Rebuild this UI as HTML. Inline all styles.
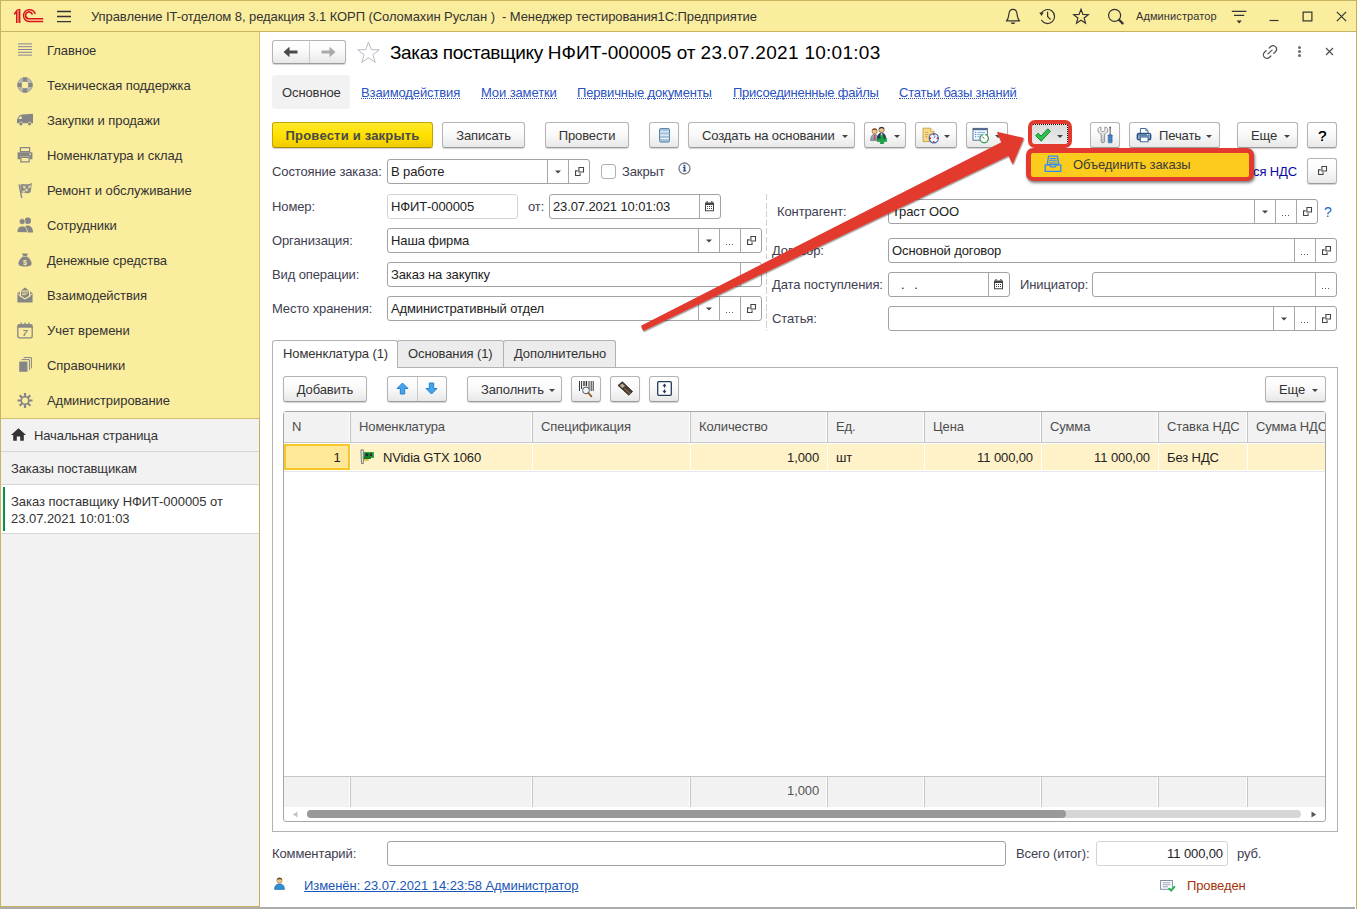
<!DOCTYPE html>
<html lang="ru">
<head>
<meta charset="utf-8">
<title>Заказ поставщику НФИТ-000005 от 23.07.2021 10:01:03</title>
<style>
*{box-sizing:border-box;margin:0;padding:0}
html,body{width:1357px;height:909px;overflow:hidden;background:#fff}
body{position:relative;font-family:"Liberation Sans",Arial,sans-serif;font-size:13px;color:#333;line-height:16px;letter-spacing:-0.11px}
.abs,.abs>*{position:absolute}
#win{position:absolute;left:0;top:0;width:1357px;height:909px;overflow:hidden}
/* frame */
#bt{left:0;top:0;width:1357px;height:1px;background:#c8b45e}
#bl{left:0;top:0;width:1px;height:909px;background:#c8b45e}
#br{left:1356px;top:0;width:1px;height:909px;background:#c4af5a}
#bb{left:0;top:907px;width:1355px;height:2px;background:#adadad}
/* header */
#hdr{left:1px;top:1px;width:1355px;height:31px;background:#fbed9e;border-bottom:1px solid #c8b45e}
#hdr .t{left:90px;top:8px;font-size:13px;color:#333;white-space:pre;letter-spacing:-0.075px}
#hdr .u{left:1135px;top:8px;font-size:11px;color:#333;line-height:14px;letter-spacing:0.1px}
/* sidebar */
#side{left:1px;top:32px;width:259px;height:386px;background:#fbed9e;border-right:1px solid #d5c36f}
#side .i{left:46px;font-size:13px;color:#333;white-space:nowrap;letter-spacing:-0.06px}
#side svg{left:17px}
#open{left:1px;top:418px;width:259px;height:489px;background:#f2f2f2;border-right:1px solid #c2ae58;border-top:1px solid #d2c070;border-bottom:1px solid #c8b45e}
#open .r{left:0;width:258px;border-bottom:1px solid #d6d6d6;font-size:13px;color:#333}
/* generic */
.btn{position:absolute;height:26px;border:1px solid #b4b4b4;border-bottom-color:#9c9c9c;border-radius:3px;background:linear-gradient(#ffffff 0%,#fafafa 45%,#e8e8e8 100%);box-shadow:0 1px 1px rgba(0,0,0,.18);font-size:13px;color:#333;line-height:25px;text-align:center;white-space:nowrap}
.inp{position:absolute;height:25px;border:1px solid #a2a2a2;border-radius:3px;background:#fff;font-size:13px;color:#222;line-height:23px;padding-left:3px;white-space:nowrap;overflow:hidden}
.inp i{position:absolute;top:0;height:23px;width:1px;background:#a8a8a8}
.lbl{position:absolute;font-size:13px;color:#404050;white-space:nowrap}
.car{position:absolute;width:0;height:0;border-left:3px solid transparent;border-right:3px solid transparent;border-top:3px solid #444}
.lnk{position:absolute;font-size:13px;color:#2a52be;white-space:nowrap;border-bottom:1px dotted #2a52be;line-height:14px;height:13px}
.inp .ic{position:absolute}
.inp .el{position:absolute;width:1px;height:1px;background:#5a5a5a;box-shadow:3px 0 #5a5a5a,6px 0 #5a5a5a}
.th{position:absolute;background:#f2f2f2;color:#4d4d4d;font-size:13px;overflow:hidden;white-space:nowrap}
.th span{position:absolute;top:7px}
.vd{position:absolute;width:1px;background:#d9d9d9}
.td{position:absolute;background:#fff2c8}
.tf{position:absolute;background:#f2f2f2}
.tx{position:absolute;font-size:13px;color:#222;white-space:nowrap}
</style>
</head>
<body>
<div id="win">

<!-- HEADER -->
<div id="hdr" class="abs">
  <div class="t">Управление IT-отделом 8, редакция 3.1 КОРП (Соломахин Руслан )  - Менеджер тестирования1С:Предприятие</div>
  <div class="u">Администратор</div>
</div>

<!-- SIDEBAR -->
<div id="side" class="abs">
  <div class="i" style="top:11px">Главное</div>
  <div class="i" style="top:46px">Техническая поддержка</div>
  <div class="i" style="top:81px">Закупки и продажи</div>
  <div class="i" style="top:116px">Номенклатура и склад</div>
  <div class="i" style="top:151px">Ремонт и обслуживание</div>
  <div class="i" style="top:186px">Сотрудники</div>
  <div class="i" style="top:221px">Денежные средства</div>
  <div class="i" style="top:256px">Взаимодействия</div>
  <div class="i" style="top:291px">Учет времени</div>
  <div class="i" style="top:326px">Справочники</div>
  <div class="i" style="top:361px">Администрирование</div>
</div>

<!-- OPEN WINDOWS PANEL -->
<div id="open" class="abs">
  <div class="r" style="top:0;height:33px"><span style="position:absolute;left:33px;top:9px">Начальная страница</span></div>
  <div class="r" style="top:33px;height:33px"><span style="position:absolute;left:10px;top:9px">Заказы поставщикам</span></div>
  <div class="r" style="top:66px;height:49px;background:#fff"><span style="position:absolute;left:10px;top:9px;width:246px;letter-spacing:-0.04px;line-height:16.5px">Заказ поставщику НФИТ-000005 от 23.07.2021 10:01:03</span>
    <div style="position:absolute;left:2px;top:2px;width:2px;height:44px;background:#009646"></div></div>
</div>

<!-- CONTENT -->
<div id="cnt" class="abs" style="position:absolute;left:0;top:0">
<!--CONTENT-START-->
<!--part1-->
<!-- title row -->
<div class="btn" style="left:272px;top:40px;width:74px;height:24px"></div>
<div style="position:absolute;left:309px;top:41px;width:1px;height:22px;background:#c9c9c9"></div>
<svg style="position:absolute;left:283px;top:46px" width="16" height="12" viewBox="0 0 16 12"><path d="M0.5 6 L6.5 0.8 L6.5 4.6 L14.5 4.6 L14.5 7.4 L6.5 7.4 L6.5 11.2 Z" fill="#4a4a4a"/></svg>
<svg style="position:absolute;left:320px;top:46px" width="16" height="12" viewBox="0 0 16 12"><path d="M15.5 6 L9.5 0.8 L9.5 4.6 L1.5 4.6 L1.5 7.4 L9.5 7.4 L9.5 11.2 Z" fill="#a9a9a9"/></svg>
<svg style="position:absolute;left:356px;top:40px" width="25" height="24" viewBox="0 0 25 24"><path d="M12.5 2 L15.2 9.6 L23.3 9.8 L16.9 14.7 L19.2 22.4 L12.5 17.8 L5.8 22.4 L8.1 14.7 L1.7 9.8 L9.8 9.6 Z" fill="#fff" stroke="#b4bcc6" stroke-width="1"/></svg>
<div style="position:absolute;left:390px;top:41px;font-size:19px;line-height:24px;color:#000;white-space:pre"><span style="letter-spacing:-0.38px">Заказ поставщику </span><span style="letter-spacing:0.05px">НФИТ-000005 </span><span style="letter-spacing:-0.11px">от </span><span style="letter-spacing:0.31px">23.07.2021 </span><span style="letter-spacing:0.27px">10:01:03</span></div>
<svg style="position:absolute;left:1261px;top:43px" width="18" height="18" viewBox="0 0 18 18" fill="none" stroke="#555" stroke-width="1.3" stroke-linecap="round"><g transform="rotate(-42 9 9)"><path d="M11 5.5H13.2A3.5 3.5 0 0 1 13.2 12.5H11"/><path d="M7 5.5H4.8A3.5 3.5 0 0 0 4.8 12.5H7"/><path d="M6.2 9H11.8"/></g></svg>
<div style="position:absolute;left:1297.5px;top:45.5px;width:3px;height:3px;background:#6e6e6e;border-radius:50%;box-shadow:0 4px 0 #6e6e6e,0 8px 0 #6e6e6e"></div>
<svg style="position:absolute;left:1324px;top:46px" width="11" height="11" viewBox="0 0 11 11" stroke="#4d4d4d" stroke-width="1.15"><path d="M2 2 L9 9 M9 2 L2 9"/></svg>

<!-- nav tabs -->
<div style="position:absolute;left:272px;top:75px;width:78px;height:34px;background:#f2f2f2;border-radius:3px"></div>
<div style="position:absolute;left:282px;top:85px;font-size:13px;color:#333">Основное</div>
<div class="lnk" style="left:361px;top:86px">Взаимодействия</div>
<div class="lnk" style="left:481px;top:86px">Мои заметки</div>
<div class="lnk" style="left:577px;top:86px;letter-spacing:-0.16px">Первичные документы</div>
<div class="lnk" style="left:733px;top:86px;letter-spacing:-0.25px">Присоединенные файлы</div>
<div class="lnk" style="left:899px;top:86px;letter-spacing:-0.19px">Статьи базы знаний</div>

<!-- toolbar -->
<div class="btn" style="left:272px;top:122px;width:161px;border-color:#c4a400;border-bottom-color:#a88c00;background:linear-gradient(#ffe92e 0%,#ffe100 50%,#f2cb00 100%);font-weight:bold;color:#4a4a4a;letter-spacing:0.2px">Провести и закрыть</div>
<div class="btn" style="left:442px;top:122px;width:83px">Записать</div>
<div class="btn" style="left:545px;top:122px;width:84px">Провести</div>
<div class="btn" style="left:649px;top:122px;width:30px"></div>
<div class="btn" style="left:688px;top:122px;width:167px;text-align:left;padding-left:13px">Создать на основании</div><div class="car" style="left:842px;top:135px"></div>
<div class="btn" style="left:864px;top:122px;width:42px"></div><div class="car" style="left:893.5px;top:135px"></div>
<div class="btn" style="left:915px;top:122px;width:42px"></div><div class="car" style="left:944px;top:135px"></div>
<div class="btn" style="left:966px;top:122px;width:42px"></div><div class="car" style="left:995px;top:135px"></div>
<div class="btn" style="left:1090px;top:122px;width:30px"></div>
<div class="btn" style="left:1129px;top:122px;width:91px;text-align:left;padding-left:29px">Печать</div><div class="car" style="left:1206px;top:135px"></div>
<div class="btn" style="left:1237px;top:122px;width:61px;text-align:left;padding-left:13px">Еще</div><div class="car" style="left:1284px;top:135px"></div>
<div class="btn" style="left:1307px;top:122px;width:30px;font-size:15px;color:#000;text-shadow:0.3px 0 0 #000">?</div>
<!--/part1-->
<!--part2-->
<div class="lbl" style="left:272px;top:164px">Состояние заказа:</div>
<div class="inp" style="left:387px;top:159px;width:203px;height:25px">В работе<i style="left:159px"></i><svg class="ic" style="left:165.5px;top:10.0px" width="8" height="5" viewBox="0 0 8 5"><path d="M1 0.4h6L4 3.6z" fill="#444"/></svg><i style="left:180px"></i><svg class="ic" style="left:186.5px;top:7.0px" width="10" height="10" viewBox="0 0 10 10" fill="none" stroke="#444" stroke-width="1.1"><path d="M3.9 0.55h4.6v4.5H3.9z"/><path d="M2.7 3.85H0.55v4.6h4.5V6.2"/></svg></div>
<div style="position:absolute;left:601px;top:164px;width:15px;height:15px;border:1px solid #b0b0b0;border-radius:3px;background:#fff"></div>
<div class="lbl" style="left:622px;top:164px">Закрыт</div>
<svg style="position:absolute;left:678px;top:162px" width="13" height="13" viewBox="0 0 13 13"><circle cx="6.5" cy="6.5" r="5.5" fill="#fdfdfd" stroke="#7d7d7d" stroke-width="1.3"/><path d="M4.9 5.1h2.5v3.5h0.9v1H4.8v-1h0.9V6.1H4.9z" fill="#1f4f9c"/><rect x="5.5" y="2.8" width="1.9" height="1.7" fill="#1f4f9c"/></svg>
<div class="lbl" style="left:1253px;top:164px;color:#0808a8">ся НДС</div>
<div class="btn" style="left:1307px;top:158px;width:30px;height:26px"></div>
<svg style="position:absolute;left:1317.5px;top:166px" width="10" height="10" viewBox="0 0 10 10" fill="none" stroke="#444" stroke-width="1.1"><path d="M3.9 0.55h4.6v4.5H3.9z"/><path d="M2.7 3.85H0.55v4.6h4.5V6.2"/></svg>
<div class="lbl" style="left:272px;top:199px">Номер:</div>
<div class="inp" style="left:387px;top:194px;width:131px;height:25px;border-color:#d4d4d4">НФИТ-000005</div>
<div class="lbl" style="left:528px;top:199px">от:</div>
<div class="inp" style="left:549px;top:194px;width:172px;height:25px">23.07.2021 10:01:03<i style="left:149px"></i><svg class="ic" style="left:154.5px;top:6.0px" width="10" height="11" viewBox="0 0 10 11"><path d="M0 1.6h9v8.6h-9z" fill="#444"/><path d="M2.2 0.2v2M6.8 0.2v2" stroke="#444" stroke-width="1.6"/><path d="M2.2 0.9v1M6.8 0.9v1" stroke="#fff" stroke-width="0.5"/><path d="M1 4.1h7v5.1h-7z" fill="#fff"/><path d="M2 5h1v1H2zM4 5h1v1H4zM6 5h1v1H6zM2 7h1v1H2zM4 7h1v1H4zM6 7h1v1H6z" fill="#444"/></svg></div>
<div class="lbl" style="left:272px;top:233px">Организация:</div>
<div class="inp" style="left:387px;top:228px;width:375px;height:25px">Наша фирма<i style="left:310px"></i><svg class="ic" style="left:316.5px;top:10.0px" width="8" height="5" viewBox="0 0 8 5"><path d="M1 0.4h6L4 3.6z" fill="#444"/></svg><i style="left:331px"></i><span class="el" style="left:338.0px;top:15px"></span><i style="left:352px"></i><svg class="ic" style="left:358.5px;top:7.0px" width="10" height="10" viewBox="0 0 10 10" fill="none" stroke="#444" stroke-width="1.1"><path d="M3.9 0.55h4.6v4.5H3.9z"/><path d="M2.7 3.85H0.55v4.6h4.5V6.2"/></svg></div>
<div class="lbl" style="left:272px;top:267px">Вид операции:</div>
<div class="inp" style="left:387px;top:262px;width:375px;height:25px">Заказ на закупку<i style="left:352px"></i></div>
<div class="lbl" style="left:272px;top:301px">Место хранения:</div>
<div class="inp" style="left:387px;top:296px;width:375px;height:25px">Административный отдел<i style="left:310px"></i><svg class="ic" style="left:316.5px;top:10.0px" width="8" height="5" viewBox="0 0 8 5"><path d="M1 0.4h6L4 3.6z" fill="#444"/></svg><i style="left:331px"></i><span class="el" style="left:338.0px;top:15px"></span><i style="left:352px"></i><svg class="ic" style="left:358.5px;top:7.0px" width="10" height="10" viewBox="0 0 10 10" fill="none" stroke="#444" stroke-width="1.1"><path d="M3.9 0.55h4.6v4.5H3.9z"/><path d="M2.7 3.85H0.55v4.6h4.5V6.2"/></svg></div>
<div style="position:absolute;left:766px;top:194px;width:1px;height:137px;background:repeating-linear-gradient(#cfcfcf 0,#cfcfcf 6px,transparent 6px,transparent 8.5px)"></div>
<div class="lbl" style="left:777px;top:204px">Контрагент:</div>
<div class="inp" style="left:888px;top:199px;width:430px;height:25px">Траст ООО<i style="left:365px"></i><svg class="ic" style="left:371.5px;top:10.0px" width="8" height="5" viewBox="0 0 8 5"><path d="M1 0.4h6L4 3.6z" fill="#444"/></svg><i style="left:386px"></i><span class="el" style="left:393.0px;top:15px"></span><i style="left:407px"></i><svg class="ic" style="left:413.5px;top:7.0px" width="10" height="10" viewBox="0 0 10 10" fill="none" stroke="#444" stroke-width="1.1"><path d="M3.9 0.55h4.6v4.5H3.9z"/><path d="M2.7 3.85H0.55v4.6h4.5V6.2"/></svg></div>
<div class="lbl" style="left:1324px;top:204px;color:#1a66c8;font-size:14px">?</div>
<div class="lbl" style="left:772px;top:243px">Договор:</div>
<div class="inp" style="left:888px;top:238px;width:449px;height:25px">Основной договор<i style="left:405px"></i><span class="el" style="left:412.0px;top:15px"></span><i style="left:426px"></i><svg class="ic" style="left:432.5px;top:7.0px" width="10" height="10" viewBox="0 0 10 10" fill="none" stroke="#444" stroke-width="1.1"><path d="M3.9 0.55h4.6v4.5H3.9z"/><path d="M2.7 3.85H0.55v4.6h4.5V6.2"/></svg></div>
<div class="lbl" style="left:772px;top:277px">Дата поступления:</div>
<div class="inp" style="left:888px;top:272px;width:122px;height:25px"><span style="display:inline-block;width:9px"></span>.<span style="display:inline-block;width:9.8px"></span>.<i style="left:99px"></i><svg class="ic" style="left:104.5px;top:6.0px" width="10" height="11" viewBox="0 0 10 11"><path d="M0 1.6h9v8.6h-9z" fill="#444"/><path d="M2.2 0.2v2M6.8 0.2v2" stroke="#444" stroke-width="1.6"/><path d="M2.2 0.9v1M6.8 0.9v1" stroke="#fff" stroke-width="0.5"/><path d="M1 4.1h7v5.1h-7z" fill="#fff"/><path d="M2 5h1v1H2zM4 5h1v1H4zM6 5h1v1H6zM2 7h1v1H2zM4 7h1v1H4zM6 7h1v1H6z" fill="#444"/></svg></div>
<div class="lbl" style="left:1020px;top:277px">Инициатор:</div>
<div class="inp" style="left:1092px;top:272px;width:245px;height:25px"><i style="left:222px"></i><span class="el" style="left:229.0px;top:15px"></span></div>
<div class="lbl" style="left:772px;top:311px">Статья:</div>
<div class="inp" style="left:888px;top:306px;width:449px;height:25px"><i style="left:384px"></i><svg class="ic" style="left:390.5px;top:10.0px" width="8" height="5" viewBox="0 0 8 5"><path d="M1 0.4h6L4 3.6z" fill="#444"/></svg><i style="left:405px"></i><span class="el" style="left:412.0px;top:15px"></span><i style="left:426px"></i><svg class="ic" style="left:432.5px;top:7.0px" width="10" height="10" viewBox="0 0 10 10" fill="none" stroke="#444" stroke-width="1.1"><path d="M3.9 0.55h4.6v4.5H3.9z"/><path d="M2.7 3.85H0.55v4.6h4.5V6.2"/></svg></div>
<!--/part2-->
<!--part3-->
<div style="position:absolute;left:272px;top:367px;width:1066px;height:465px;border:1px solid #b2b2b2;background:#fff"></div>
<div style="position:absolute;left:272px;top:340px;width:126px;height:28px;border:1px solid #b2b2b2;border-bottom:0;border-radius:3px 3px 0 0;background:#fff"></div>
<div style="position:absolute;left:397px;top:340px;width:107px;height:27px;border:1px solid #b2b2b2;border-bottom:0;border-radius:3px 3px 0 0;background:#ececec"></div>
<div style="position:absolute;left:503px;top:340px;width:113px;height:27px;border:1px solid #b2b2b2;border-bottom:0;border-radius:3px 3px 0 0;background:#ececec"></div>
<div class="lbl" style="left:283px;top:346px;color:#333">Номенклатура (1)</div>
<div class="lbl" style="left:408px;top:346px;color:#333">Основания (1)</div>
<div class="lbl" style="left:514px;top:346px;color:#333">Дополнительно</div>
<div class="btn" style="left:283px;top:376px;width:84px">Добавить</div>
<div class="btn" style="left:387px;top:376px;width:60px"></div>
<div style="position:absolute;left:417px;top:377px;width:1px;height:24px;background:#c9c9c9"></div>
<svg style="position:absolute;left:396px;top:382px" width="13" height="13" viewBox="0 0 13 13"><path d="M6.5 1 L12 6.5 H8.7 V12 H4.3 V6.5 H1 Z" fill="#42a5ee" stroke="#2a7fcb" stroke-width="1" stroke-linejoin="round" transform=""/></svg>
<svg style="position:absolute;left:425px;top:382px" width="13" height="13" viewBox="0 0 13 13"><path d="M6.5 1 L12 6.5 H8.7 V12 H4.3 V6.5 H1 Z" fill="#42a5ee" stroke="#2a7fcb" stroke-width="1" stroke-linejoin="round" transform="rotate(180 6.5 6.5)"/></svg>
<div class="btn" style="left:467px;top:376px;width:95px;text-align:left;padding-left:13px">Заполнить</div><div class="car" style="left:549px;top:389px"></div>
<div class="btn" style="left:571px;top:376px;width:30px"></div>
<div class="btn" style="left:610px;top:376px;width:30px"></div>
<div class="btn" style="left:649px;top:376px;width:30px"></div>
<div class="btn" style="left:1265px;top:376px;width:61px;text-align:left;padding-left:13px">Еще</div><div class="car" style="left:1312px;top:389px"></div>
<div style="position:absolute;left:283px;top:411px;width:1043px;height:411px;border:1px solid #a6a6a6;border-radius:3px;background:#fff;overflow:hidden"></div>
<div class="th" style="left:284px;top:412px;width:65px;height:30px"><span style="left:8px">N</span></div>
<div class="vd" style="left:350px;top:412px;height:31px;background:#c2c2c2"></div>
<div class="td" style="left:284px;top:444px;width:66px;height:26px"></div>
<div class="tf" style="left:284px;top:777px;width:65px;height:30px"></div>
<div class="vd" style="left:350px;top:777px;height:30px;background:#c6c6c6"></div>
<div class="th" style="left:351px;top:412px;width:180px;height:30px"><span style="left:8px">Номенклатура</span></div>
<div class="vd" style="left:532px;top:412px;height:31px;background:#c2c2c2"></div>
<div class="td" style="left:351px;top:444px;width:181px;height:26px"></div>
<div class="tf" style="left:351px;top:777px;width:180px;height:30px"></div>
<div class="vd" style="left:532px;top:777px;height:30px;background:#c6c6c6"></div>
<div class="tx" style="left:383px;top:450px;letter-spacing:-0.2px">NVidia GTX 1060</div>
<div class="th" style="left:533px;top:412px;width:156px;height:30px"><span style="left:8px">Спецификация</span></div>
<div class="vd" style="left:690px;top:412px;height:31px;background:#c2c2c2"></div>
<div class="td" style="left:533px;top:444px;width:157px;height:26px"></div>
<div class="tf" style="left:533px;top:777px;width:156px;height:30px"></div>
<div class="vd" style="left:690px;top:777px;height:30px;background:#c6c6c6"></div>
<div class="th" style="left:691px;top:412px;width:135px;height:30px"><span style="left:8px">Количество</span></div>
<div class="vd" style="left:827px;top:412px;height:31px;background:#c2c2c2"></div>
<div class="td" style="left:691px;top:444px;width:136px;height:26px"></div>
<div class="tf" style="left:691px;top:777px;width:135px;height:30px"></div>
<div class="vd" style="left:827px;top:777px;height:30px;background:#c6c6c6"></div>
<div class="tx" style="left:691px;width:128px;top:450px;text-align:right">1,000</div>
<div class="tx" style="left:691px;width:128px;top:783px;text-align:right;color:#555">1,000</div>
<div class="th" style="left:828px;top:412px;width:95px;height:30px"><span style="left:8px">Ед.</span></div>
<div class="vd" style="left:924px;top:412px;height:31px;background:#c2c2c2"></div>
<div class="td" style="left:828px;top:444px;width:96px;height:26px"></div>
<div class="tf" style="left:828px;top:777px;width:95px;height:30px"></div>
<div class="vd" style="left:924px;top:777px;height:30px;background:#c6c6c6"></div>
<div class="tx" style="left:836px;top:450px">шт</div>
<div class="th" style="left:925px;top:412px;width:115px;height:30px"><span style="left:8px">Цена</span></div>
<div class="vd" style="left:1041px;top:412px;height:31px;background:#c2c2c2"></div>
<div class="td" style="left:925px;top:444px;width:116px;height:26px"></div>
<div class="tf" style="left:925px;top:777px;width:115px;height:30px"></div>
<div class="vd" style="left:1041px;top:777px;height:30px;background:#c6c6c6"></div>
<div class="tx" style="left:925px;width:108px;top:450px;text-align:right">11 000,00</div>
<div class="th" style="left:1042px;top:412px;width:115px;height:30px"><span style="left:8px">Сумма</span></div>
<div class="vd" style="left:1158px;top:412px;height:31px;background:#c2c2c2"></div>
<div class="td" style="left:1042px;top:444px;width:116px;height:26px"></div>
<div class="tf" style="left:1042px;top:777px;width:115px;height:30px"></div>
<div class="vd" style="left:1158px;top:777px;height:30px;background:#c6c6c6"></div>
<div class="tx" style="left:1042px;width:108px;top:450px;text-align:right">11 000,00</div>
<div class="th" style="left:1159px;top:412px;width:87px;height:30px"><span style="left:8px">Ставка НДС</span></div>
<div class="vd" style="left:1247px;top:412px;height:31px;background:#c2c2c2"></div>
<div class="td" style="left:1159px;top:444px;width:88px;height:26px"></div>
<div class="tf" style="left:1159px;top:777px;width:87px;height:30px"></div>
<div class="vd" style="left:1247px;top:777px;height:30px;background:#c6c6c6"></div>
<div class="tx" style="left:1167px;top:450px">Без НДС</div>
<div class="th" style="left:1248px;top:412px;width:77px;height:30px"><span style="left:8px">Сумма НДС</span></div>
<div class="td" style="left:1248px;top:444px;width:77px;height:26px"></div>
<div class="tf" style="left:1248px;top:777px;width:77px;height:30px"></div>
<div style="position:absolute;left:284px;top:776px;width:1041px;height:1px;background:#c6c6c6"></div>
<div style="position:absolute;left:284px;top:471px;width:1041px;height:1px;background:#e8e8e8"></div>
<div style="position:absolute;left:284px;top:442px;width:1041px;height:1px;background:#c8c8c8"></div>
<div style="position:absolute;left:284px;top:444px;width:66px;height:26px;border:2px solid #f9c62a;background:#ffe897"></div>
<div class="tx" style="left:284px;width:56.5px;top:450px;text-align:right">1</div>
<div style="position:absolute;left:307px;top:810px;width:994px;height:8px;border-radius:4px;background:#d6d6d6"></div>
<div style="position:absolute;left:307px;top:810px;width:759px;height:8px;border-radius:4px;background:#999"></div>
<svg style="position:absolute;left:292px;top:811px" width="6" height="7" viewBox="0 0 6 7"><path d="M5.5 0.5v6L0.8 3.5z" fill="#c4c4c4"/></svg>
<svg style="position:absolute;left:1311px;top:811px" width="6" height="7" viewBox="0 0 6 7"><path d="M0.5 0.5v6L5.2 3.5z" fill="#555"/></svg>
<div class="lbl" style="left:272px;top:846px">Комментарий:</div>
<div class="inp" style="left:387px;top:841px;width:619px;height:25px"></div>
<div class="lbl" style="left:1016px;top:846px">Всего (итог):</div>
<div class="inp" style="left:1096px;top:841px;width:132px;height:25px;border-color:#d4d4d4;text-align:right;padding-right:4px">11 000,00</div>
<div class="lbl" style="left:1237px;top:846px">руб.</div>
<div style="position:absolute;left:304px;top:878px;font-size:13px;color:#1a55b8;text-decoration:underline;white-space:nowrap;letter-spacing:-0.06px">Изменён: 23.07.2021 14:23:58 Администратор</div>
<div style="position:absolute;left:1187px;top:878px;font-size:13px;color:#a3320b;white-space:nowrap">Проведен</div>
<!--/part3-->
<!--part4-->
<!-- header icons -->
<svg style="position:absolute;left:13px;top:8px" width="32" height="16" viewBox="0 0 32 16">
 <g fill="none" stroke="#d8131b" stroke-width="1.5">
  <path d="M22.2 6.2 A5.9 5.9 0 1 0 15.7 13.4 H30.2"/>
  <path d="M19.3 6.6 A3.4 3.4 0 1 0 15.7 10.7 H30.2"/>
 </g>
 <path d="M1 5.2 L4.2 1 H7.4 V15 H3 V5.6 L1.6 7.2 Z" fill="#d8131b"/>
 <path d="M5 1.4V15" stroke="#fbed9e" stroke-width="0.9"/>
</svg>
<svg style="position:absolute;left:57px;top:10px" width="14" height="13" viewBox="0 0 14 13" stroke="#333" stroke-width="1.3"><path d="M0 1.5h14M0 6.5h14M0 11.6h14"/></svg>
<svg style="position:absolute;left:1004px;top:7px" width="18" height="18" viewBox="0 0 18 18" fill="none" stroke="#333" stroke-width="1.2" stroke-linejoin="round"><path d="M2.4 13.9 C4.6 12 4.6 9.6 4.9 7 C5.2 4.2 6.6 2.3 9 2.3 C11.4 2.3 12.8 4.2 13.1 7 C13.4 9.6 13.4 12 15.6 13.9 Z"/><path d="M6.6 15.5h4.8l-1.2 1.5h-2.4z" fill="#333" stroke="none"/></svg>
<svg style="position:absolute;left:1038px;top:7px" width="19" height="19" viewBox="0 0 19 19" fill="none" stroke="#333" stroke-width="1.2" stroke-linecap="round"><path d="M3.2 6.6 A7 7 0 1 1 3.6 13.2"/><path d="M9.6 5v4.4l2.6 2.8"/><path d="M1.3 5.5h4.2L3.6 9z" fill="#333" stroke="none"/></svg>
<svg style="position:absolute;left:1072px;top:7px" width="18" height="18" viewBox="0 0 18 18" fill="none" stroke="#333" stroke-width="1.2" stroke-linejoin="miter"><path d="M9 2.3 L10.9 7.4 L16.3 7.7 L12.1 11 L13.5 16.2 L9 13.3 L4.5 16.2 L5.9 11 L1.7 7.7 L7.1 7.4 Z"/></svg>
<svg style="position:absolute;left:1107px;top:8px" width="18" height="18" viewBox="0 0 18 18" fill="none" stroke="#333"><circle cx="7.6" cy="7.4" r="6" stroke-width="1.2"/><path d="M12 11.8 L15.6 15.4" stroke-width="2.2" stroke-linecap="round"/></svg>
<svg style="position:absolute;left:1231px;top:9px" width="16" height="16" viewBox="0 0 16 16" stroke="#333" stroke-width="1.2"><path d="M0.8 2.4h14.6M3 6.4h10.2"/><path d="M5.6 11.6h5.2l-2.6 3z" fill="#333" stroke="none"/></svg>
<svg style="position:absolute;left:1269px;top:19px" width="10" height="3" viewBox="0 0 10 3"><path d="M0.5 1.5h9" stroke="#333" stroke-width="1.2"/></svg>
<svg style="position:absolute;left:1302px;top:11px" width="11" height="11" viewBox="0 0 11 11"><rect x="1.1" y="1.1" width="8.8" height="8.8" fill="none" stroke="#333" stroke-width="1.2"/></svg>
<svg style="position:absolute;left:1336px;top:11px" width="11" height="11" viewBox="0 0 11 11"><path d="M0.8 0.8l9.4 9.4M10.2 0.8L0.8 10.2" stroke="#333" stroke-width="1.2"/></svg>

<!-- sidebar icons -->
<svg style="position:absolute;left:18px;top:43px" width="14" height="13" viewBox="0 0 14 13" stroke="#84849a" stroke-width="1"><path d="M0 0.9h14M0 3.7h14M0 6.5h14M0 9.3h14M0 12.1h14"/></svg>
<svg style="position:absolute;left:17px;top:77px" width="16" height="16" viewBox="0 0 16 16"><circle cx="8" cy="8" r="5.4" fill="none" stroke="#b9b9b0" stroke-width="4"/><g stroke="#868686" stroke-width="4.2" fill="none"><path d="M8 0.6v4.2M8 11.2v4.2M0.6 8h4.2M11.2 8h4.2"/></g><circle cx="8" cy="8" r="7.4" fill="none" stroke="#8a8a8a" stroke-width="0.6"/></svg>
<svg style="position:absolute;left:16px;top:113px" width="18" height="14" viewBox="0 0 18 14" fill="#868686"><path d="M6.2 1.6 L17 0.8 V10.2 H15.4 A2 2 0 0 0 11.6 10.2 H6.8 A2 2 0 0 0 3 10.2 H1 V6.4 L3.2 2.6 Z"/><circle cx="4.9" cy="10.8" r="1.6"/><circle cx="13.5" cy="10.8" r="1.6"/><path d="M3.9 3.4 L5.6 3.3 V6 H2.5 Z" fill="#fbed9e"/></svg>
<svg style="position:absolute;left:17px;top:147px" width="16" height="16" viewBox="0 0 16 16" fill="#868686"><path d="M3.4 0.6h9.2v4H3.4z" fill="none" stroke="#868686" stroke-width="1.2"/><path d="M0.6 5.2h14.8v7H12.8V9.4H3.2v2.8H0.6z"/><path d="M3.8 10.4h8.4v4.4H3.8z" fill="none" stroke="#868686" stroke-width="1.2"/><rect x="12.4" y="6.6" width="1.6" height="1.2" fill="#fbed9e"/></svg>
<svg style="position:absolute;left:18px;top:182px" width="15" height="17" viewBox="0 0 15 17"><path d="M2.2 2.8 C5.4 0.6 9 4 14 0.8 L12.6 10.2 C8 12.8 6.4 9.6 3.4 11.4 Z" fill="#8a8a8a"/><path d="M1 2.4 L3.8 16" stroke="#868686" stroke-width="1.3" fill="none"/><path d="M5.2 3.4l2.6 0.8l-0.3 2.5l-2.5-0.8zM10.3 4.1l2.7-1l-0.4 2.6l-2.6 0.9zM7.5 6.7l2.5 0.3l-0.3 2.6l-2.5-0.5zM4.3 8.4l2.8 0l-0.1 2.1l-2.5 0.3z" fill="#fbed9e" opacity=".75"/></svg>
<svg style="position:absolute;left:17px;top:217px" width="16" height="16" viewBox="0 0 16 16" fill="#868686"><circle cx="10.8" cy="3.8" r="3.2"/><path d="M5.6 15.4 C5.6 10.6 8 8.4 10.8 8.4 C13.6 8.4 16 10.6 16 15.4 Z"/><circle cx="5.2" cy="4.6" r="3" stroke="#fbed9e" stroke-width="0.8"/><path d="M0 15.6 C0 11 2.4 9 5.2 9 C8 9 10.4 11 10.4 15.6 Z" stroke="#fbed9e" stroke-width="0.8"/></svg>
<svg style="position:absolute;left:18px;top:253px" width="14" height="14" viewBox="0 0 14 14" fill="#868686"><path d="M4 0.4h6l-1.2 2.6H5.2z"/><path d="M4.8 3.6h4.4 C12 5.6 13.6 8.4 13.6 10.6 C13.6 12.6 12 13.6 7 13.6 C2 13.6 0.4 12.6 0.4 10.6 C0.4 8.4 2 5.6 4.8 3.6z"/><text x="7" y="11.6" font-family="Liberation Sans,sans-serif" font-size="7" font-weight="bold" fill="#fbed9e" text-anchor="middle">$</text></svg>
<svg style="position:absolute;left:17px;top:287px" width="16" height="16" viewBox="0 0 16 16" fill="#868686"><path d="M0.4 6.2 L8 0.4 L15.6 6.2 V15.4 H0.4 Z"/><path d="M2.8 3.6h10.4v6L8 12.2L2.8 9.6z" fill="#fbed9e"/><path d="M4 4.6h8v4.6L8 11.2L4 9.2z"/><path d="M5 6h6M5 7.6h4" stroke="#fbed9e" stroke-width="0.8"/><path d="M0.8 7l7.2 5l7.2-5" fill="none" stroke="#fbed9e" stroke-width="0.9"/></svg>
<svg style="position:absolute;left:17px;top:322px" width="16" height="17" viewBox="0 0 16 17" fill="none" stroke="#868686"><rect x="0.8" y="2.6" width="14.4" height="13.2" rx="1.6" stroke-width="1.3"/><path d="M1 4.4h14" stroke-width="2.6"/><path d="M4.2 0.4v3.4M8 0.4v3.4M11.8 0.4v3.4" stroke-width="1.3" stroke="#8a8a8a"/><text x="8" y="14" font-family="Liberation Sans,sans-serif" font-size="9" font-weight="bold" font-style="italic" fill="#868686" stroke="none" text-anchor="middle">7</text></svg>
<svg style="position:absolute;left:19px;top:357px" width="13" height="15" viewBox="0 0 13 15" fill="none" stroke="#868686" stroke-width="1"><path d="M4.6 0.6h7.8v10.8"/><path d="M2.6 2.6h7.8v10.6"/><rect x="0.2" y="4.6" width="8.2" height="10.2" fill="#868686" stroke="none"/></svg>
<svg style="position:absolute;left:17px;top:393px" width="16" height="15" viewBox="0 0 16 15"><g stroke="#868686" stroke-width="2.2"><path d="M8 0v15M0.5 7.5h15M2.7 2.2l10.6 10.6M13.3 2.2L2.7 12.8"/></g><circle cx="8" cy="7.5" r="4.6" fill="#868686"/><circle cx="8" cy="7.5" r="3" fill="#fbed9e"/></svg>
<svg style="position:absolute;left:11px;top:428px" width="15" height="13" viewBox="0 0 15 13" fill="#333"><path d="M7.5 0.3 L15 7 H12.8 V12.7 H9.2 V8.4 H5.8 V12.7 H2.2 V7 H0 Z"/></svg>
<!--/part4-->
<!--part5-->
<!-- toolbar icons -->
<svg style="position:absolute;left:659px;top:128px" width="11" height="15" viewBox="0 0 11 15"><rect x="0.5" y="0.5" width="10" height="13.6" rx="1.4" fill="#a5c2da" stroke="#5a86ab"/><path d="M1.2 3.7h8.6M1.2 7.1h8.6M1.2 10.5h8.6" stroke="#eef5fb" stroke-width="1.1"/></svg>
<!-- people plus -->
<svg style="position:absolute;left:870px;top:126px" width="18" height="18" viewBox="0 0 18 18">
 <circle cx="4.6" cy="5.2" r="2.6" fill="#f0c58c" stroke="#8a5a22" stroke-width="0.6"/><path d="M2 4.4 C2.4 1.8 6.8 1.8 7.2 4.4 C6 3.4 3.2 3.4 2 4.4z" fill="#7a4a18"/>
 <path d="M0.6 14.6 C0.6 10.2 2.4 8.4 4.6 8.4 C6.8 8.4 8.6 10.2 8.6 14.6z" fill="#8fa4bf" stroke="#50627c" stroke-width="0.6"/><path d="M4 8.6h1.2l0.5 5.4h-2.2z" fill="#d05a40"/>
 <circle cx="11.6" cy="3.8" r="2.7" fill="#f0c58c" stroke="#5a4a3a" stroke-width="0.6"/><path d="M8.8 3.2 C9.2 0.2 14 0.2 14.4 3.2 C13 2 10.2 2 8.8 3.2z" fill="#1f2a44"/>
 <path d="M7.4 13.4 C7.4 9 9.2 7 11.6 7 C14 7 15.8 9 15.8 13.4z" fill="#27365a" stroke="#141c33" stroke-width="0.6"/><path d="M11 7.2h1.2l0.6 3.2h-2.4z" fill="#e8eef8"/>
 <path d="M10.4 9.4h3.2v3h3v3.2h-3v2.8h-3.2v-2.8h-3v-3.2h3z" fill="#19a546" stroke="#0b7a2d" stroke-width="0.5"/>
</svg>
<!-- doc + clock -->
<svg style="position:absolute;left:922px;top:127px" width="18" height="17" viewBox="0 0 18 17">
 <path d="M1 1.2h7.6l3.4 3.4v10H1z" fill="#f4d98e" stroke="#c9a03c" stroke-width="0.9"/><path d="M8.6 1.2v3.4H12" fill="#fbeec0" stroke="#c9a03c" stroke-width="0.7"/>
 <path d="M3 5.4h3M3 7.6h4.4M3 9.8h2.6" stroke="#c9a03c" stroke-width="0.8"/>
 <circle cx="11.8" cy="11.2" r="4.6" fill="#f4f8ff" stroke="#3a6db8" stroke-width="1.2"/>
 <circle cx="11.8" cy="7.6" r="0.9" fill="#e02020"/><circle cx="11.8" cy="14.8" r="0.9" fill="#e02020"/><circle cx="8.2" cy="11.2" r="0.9" fill="#e02020"/><circle cx="15.4" cy="11.2" r="0.9" fill="#e02020"/>
 <path d="M11.8 11.2l1.6-2.4" stroke="#3a6db8" stroke-width="0.9"/>
</svg>
<!-- list + timer -->
<svg style="position:absolute;left:972px;top:127px" width="18" height="17" viewBox="0 0 18 17">
 <rect x="1" y="1.4" width="14.4" height="11.8" fill="#f8fbff" stroke="#5a7390" stroke-width="1"/><path d="M1 2.2h14.4" stroke="#4f6a8c" stroke-width="2"/>
 <path d="M3 5.4h1.2M3 7.6h1.2M3 9.8h1.2" stroke="#3a7be0" stroke-width="1"/><path d="M5.4 5.4h7.6M5.4 7.6h4M5.4 9.8h2.4" stroke="#7aa6e8" stroke-width="1"/>
 <circle cx="12.2" cy="11.6" r="4.2" fill="#fafffa" stroke="#3f9a5c" stroke-width="1.3"/><path d="M12.2 11.6l-1.8-2" stroke="#555" stroke-width="1"/><path d="M12.2 6.4v1.6" stroke="#fafffa" stroke-width="1.6"/>
</svg>
<!-- check button (pressed) -->
<div style="position:absolute;left:1032px;top:124px;width:36px;height:20px;background:linear-gradient(#dadada,#ececec);border-top:1px dotted #111;border-right:1px dotted #111"></div>
<svg style="position:absolute;left:1034px;top:127px" width="18" height="16" viewBox="0 0 18 16"><path d="M1.6 8.6 L4.2 6.2 L7 9 L13.8 1.8 L16.4 4.2 L7.2 14.2 Z" fill="#2fbf4f" stroke="#1b8a34" stroke-width="1" stroke-linejoin="round"/></svg>
<div class="car" style="left:1057px;top:135px"></div>
<!-- tools -->
<svg style="position:absolute;left:1097px;top:126px" width="17" height="18" viewBox="0 0 17 18">
 <defs><linearGradient id="wg" x1="0" y1="0" x2="0" y2="1"><stop offset="0" stop-color="#fdfdfd"/><stop offset="1" stop-color="#bdbdbd"/></linearGradient></defs>
 <path d="M4.2 15.8 V8.2 C2 7.4 0.8 5.6 1 3.6 C1.2 2.4 2 1.4 3.9 1 V4.2 C3.9 5.2 4.7 5.6 5.9 5.6 C7.1 5.6 7.9 5.2 7.9 4.2 V1 C9.8 1.4 10.6 2.4 10.8 3.6 C11 5.6 9.8 7.4 7.6 8.2 V15.8 C7.6 17 4.2 17 4.2 15.8 Z" fill="url(#wg)" stroke="#8a8a8a" stroke-width="0.9" stroke-linejoin="round"/>
 <path d="M13.2 1.2v7.6" stroke="#8c8c8c" stroke-width="1.5"/><rect x="12.5" y="0.8" width="1.5" height="1.4" fill="#555"/>
 <rect x="11.2" y="8.7" width="3.9" height="8.1" rx="0.7" fill="#4a7fc4" stroke="#2f5f9e" stroke-width="0.6"/><path d="M10.8 9.6h4.7" stroke="#3a6cb0" stroke-width="1"/>
</svg>
<!-- printer -->
<svg style="position:absolute;left:1136px;top:127px" width="16" height="16" viewBox="0 0 16 16">
 <path d="M4.4 1.5h5.4l2.2 2.2v3H4.4z" fill="#fff" stroke="#44699a" stroke-width="1"/><path d="M9.8 1.5v2.2H12" fill="none" stroke="#44699a" stroke-width="0.8"/>
 <rect x="1.3" y="6.4" width="13.4" height="6.4" rx="1.6" fill="#7fa3cc" stroke="#2c5586" stroke-width="1.4"/>
 <path d="M2.4 8h11.2" stroke="#2c5586" stroke-width="0.8"/><rect x="11" y="7.2" width="1" height="0.9" fill="#fff"/><rect x="12.6" y="7.2" width="1" height="0.9" fill="#fff"/>
 <rect x="4.4" y="10" width="7.6" height="4.8" fill="#fff" stroke="#44699a" stroke-width="1"/>
</svg>

<!-- table toolbar icons -->
<svg style="position:absolute;left:578px;top:380px" width="17" height="18" viewBox="0 0 17 18"><g stroke="#333" fill="none"><path d="M1.5 1v10M3.6 1v8" stroke-width="1"/><path d="M6 1v5M8.4 1v5" stroke-width="1.4"/><path d="M11 1v8M13.2 1v10M15.2 1v10" stroke-width="1"/></g><circle cx="8" cy="10.4" r="3.4" fill="#eef6ff" stroke="#555" stroke-width="1"/><path d="M10.4 13l3 3.4" stroke="#8a5a22" stroke-width="1.8" stroke-linecap="round"/></svg>
<svg style="position:absolute;left:617px;top:381px" width="17" height="15" viewBox="0 0 17 15"><path d="M1 4.4 L5.4 0.8 L15.6 10.6 L11.8 14.2 Z" fill="#4a3c30" stroke="#2a2018" stroke-width="0.8"/><path d="M2.8 4.4L5.2 2.4L8 5L5.4 7z" fill="#b8b0a0"/><path d="M7.4 7.4l6 5.4" stroke="#7a6a58" stroke-width="1.2"/></svg>
<svg style="position:absolute;left:657px;top:381px" width="15" height="15" viewBox="0 0 15 15"><rect x="0.7" y="0.7" width="13.6" height="13.6" rx="1" fill="#fff" stroke="#243b5a" stroke-width="1.3"/><path d="M7.5 3v3.6M7.5 8.4V12" stroke="#243b5a" stroke-width="1"/><path d="M5.4 5.2L7.5 2.6L9.6 5.2zM5.4 9.8L7.5 12.4L9.6 9.8z" fill="#243b5a"/></svg>

<!-- row icon: video card -->
<svg style="position:absolute;left:360px;top:449px" width="15" height="16" viewBox="0 0 15 16"><path d="M0.9 0.9H3.3V14.6H1.5Z" fill="#f2f2f2" stroke="#5f5f5f" stroke-width="0.8"/><path d="M3.7 2.9H13.9V8.4H11.4L10.2 10H3.7Z" fill="#22a53a"/><path d="M3.7 7.6H13.9V8.4H11.4L10.2 10H3.7Z" fill="#157a29"/><rect x="5.3" y="4.3" width="3.1" height="3" fill="#2b2b38"/><rect x="9.6" y="4.3" width="2.5" height="2.7" fill="#2b2b38"/><rect x="4" y="10" width="4.6" height="1.7" fill="#d6c22c"/></svg>

<!-- bottom icons -->
<svg style="position:absolute;left:274px;top:877px" width="11" height="13" viewBox="0 0 11 13"><circle cx="5.5" cy="3.6" r="2.6" fill="#f0c58c" stroke="#8a5a22" stroke-width="0.5"/><path d="M2.8 2.8 C3.2 0.2 7.8 0.2 8.2 2.8 C7 2 4 2 2.8 2.8z" fill="#6a4218"/><path d="M0.6 12.4 C0.6 8.4 2.6 7 5.5 7 C8.4 7 10.4 8.4 10.4 12.4z" fill="#2d8fd6" stroke="#1a5f9a" stroke-width="0.6"/></svg>
<svg style="position:absolute;left:1160px;top:879px" width="17" height="14" viewBox="0 0 17 14"><rect x="0.6" y="1.5" width="11.8" height="8.8" fill="#fff" stroke="#7f8fa6" stroke-width="1"/><path d="M2.6 3.8h7.8M2.6 5.8h7.8M2.6 7.8h5.4" stroke="#8d97a8" stroke-width="0.9"/><path d="M9.2 9.6l1.9 2.1l3.3-3.9" fill="none" stroke="#22b14c" stroke-width="1.9" stroke-linejoin="round" stroke-linecap="round"/></svg>
<!--/part5-->
<!--part6-->
<!-- annotation: red frames, popup menu, arrow -->
<div style="position:absolute;left:1026px;top:148px;width:228px;height:32.5px;border-radius:7px;background:#e23a2f;box-shadow:1px 2px 3px rgba(0,0,0,.5)"></div>
<div style="position:absolute;left:1031px;top:153px;width:218px;height:24px;border-radius:2px;background:#fbcb1e"></div>
<svg style="position:absolute;left:1044px;top:155px" width="18" height="18" viewBox="0 0 18 18" fill="none" stroke="#2b8cff" stroke-width="1.3" stroke-linejoin="round"><path d="M4.6 1.2h8.8l1.4 8.4H3.2z"/><path d="M5.6 3.6h6.8M5.2 5.8h7.6M4.8 8h8.4" stroke-width="1.1"/><path d="M1.2 9.8h4.4l1 2h4.8l1-2h4.4v6.6H1.2z"/></svg>
<div style="position:absolute;left:1073px;top:157px;font-size:13px;color:#3b3b3b;white-space:nowrap">Объединить заказы</div>
<div style="position:absolute;left:1028.2px;top:120.2px;width:43.6px;height:27.6px;border:4.5px solid #e23a2f;border-radius:7px"></div>
<svg style="position:absolute;left:600px;top:100px;overflow:visible" width="460" height="250" viewBox="600 100 460 250">
 <defs><filter id="ash" x="-5%" y="-5%" width="110%" height="115%"><feDropShadow dx="0.6" dy="1.3" stdDeviation="0.7" flood-color="#000" flood-opacity=".4"/></filter></defs>
 <path d="M641.8 326 L1002.2 142.5 L997.8 132.8 L1023 138.4 L1012.6 163 L1008.9 154.9 L643.5 330 Z" fill="#e23a2f" stroke="#e23a2f" stroke-width="1.4" stroke-linejoin="round" filter="url(#ash)"/>
</svg>
<!--/part6-->
<!--CONTENT-END-->
</div>

<div id="bt" class="abs" style="position:absolute"></div>
<div id="bl" style="position:absolute"></div>
<div id="br" style="position:absolute"></div>
<div id="bb" style="position:absolute"></div>
</div>
</body>
</html>
